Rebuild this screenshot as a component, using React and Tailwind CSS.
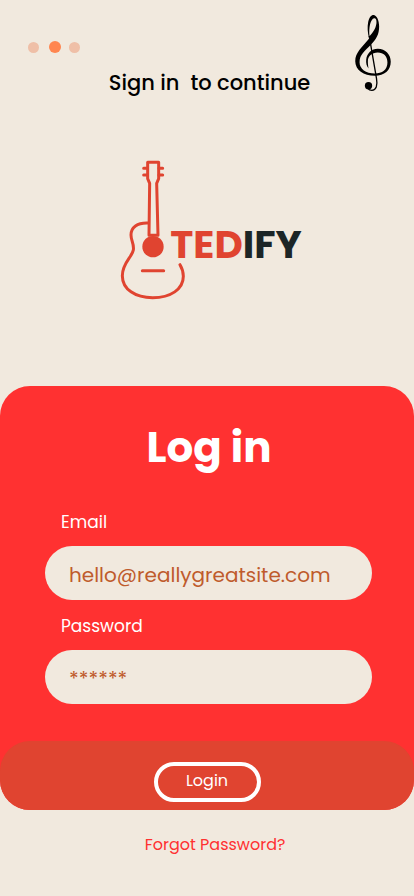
const fontStack = "font-[Poppins,Inter,'Open_Sans',sans-serif]";

function TrebleClef() {
  return (
    <svg viewBox="45 29 107 229" className="h-[76px] w-9" aria-hidden="true">
      <path
        fillRule="evenodd"
        d="M87 100C82 82 81 64 84 50C87 37 93 29 100 29C109 29 117 44 117 64C117 88 108 103 92 119C74 137 58 149 58 171C58 191 77 205 104 205C126 205 142 194 142 172C142 153 130 142 113 142C95 142 83 153 83 168C83 177 84 182 85 190C79 183 77 174 78 163C80 145 94 131 113 131C136 131 152 148 152 170C152 196 133 212 104 212C70 212 45 194 45 168C45 143 64 127 87 100ZM88 93C101 80 109 64 109 50C109 42 106 38 102 39C91 41 85 68 88 93Z"
      />
      <path
        d="M87 92L109 220C113 242 108 256 95 256Q88 256 82 250"
        fill="none"
        stroke="#000"
        strokeWidth="4"
      />
      <circle cx="85" cy="242" r="11" />
    </svg>
  );
}

function Guitar() {
  return (
    <svg viewBox="32 28 198 420" className="h-[140px] w-[66px] shrink-0" aria-hidden="true">
      <g fill="none" stroke="#e04430" strokeWidth="9" strokeLinecap="round" strokeLinejoin="round">
        <path d="M119 254L121 98L115 84V35H148V84L142 98L146 254Z" />
        <path d="M103 53H114M103 73H114M149 53H160M149 73H160" />
        <path d="M115 217C84 216 65 230 65 253C65 271 75 280 72 298C68 320 39 337 39 375C39 416 78 441 130 441C184 441 222 416 222 377C222 362 218 352 212 342" />
        <path d="M99 360H163" />
      </g>
      <circle cx="131" cy="288" r="32" fill="#e04430" />
    </svg>
  );
}

function Field({ id, label, type, placeholder }) {
  return (
    <div className="flex flex-col">
      <label htmlFor={id} className="h-[50px] pl-4 pt-3.5 text-[17px] leading-6 text-white">
        {label}
      </label>
      <input
        id={id}
        type={type}
        placeholder={placeholder}
        className="h-[54px] w-full rounded-[27px] bg-[#f1e9de] px-6 pt-1 text-[20px] text-[#bf5b2c] outline-none placeholder:text-[#bf5b2c]"
      />
    </div>
  );
}

export default function App() {
  return (
    <main className={`min-h-screen bg-[#f1e9de] ${fontStack}`}>
      <header className="grid grid-cols-[1fr_auto_1fr] items-start pl-7 pr-[23px] pt-[15px]">
        <div className="flex items-center gap-2 pt-[26px]">
          <span className="size-[11px] rounded-full bg-[#efbfa7]" />
          <span className="ml-0.5 size-3 rounded-full bg-[#ff8650]" />
          <span className="size-[11px] rounded-full bg-[#efbfa7]" />
        </div>
        <h2 className="whitespace-pre pt-[52px] text-[21px] font-medium leading-8 text-black">
          {"Sign in  to continue"}
        </h2>
        <div className="flex justify-end">
          <TrebleClef />
        </div>
      </header>

      <div className="flex items-center justify-center pb-[86px] pl-2 pt-[61px]">
        <Guitar />
        <p className="-ml-4 pt-7 text-[39px] font-bold leading-none text-[#e04430]">
          TED<span className="text-[#1c2526]">IFY</span>
        </p>
      </div>

      <form className="rounded-[30px] bg-[#ff3131]" onSubmit={(e) => e.preventDefault()}>
        <h1 className="pl-1 pt-8 text-center text-[42px] font-bold leading-[60px] text-white">
          Log in
        </h1>
        <div className="flex flex-col pb-[37px] pl-[45px] pr-[42px] pt-[18px]">
          <Field id="email" label="Email" type="email" placeholder="hello@reallygreatsite.com" />
          <Field id="password" label="Password" type="password" placeholder="******" />
        </div>
        <div className="flex justify-center rounded-[30px] bg-[#e04430] pb-2 pt-[21px]">
          <button
            type="submit"
            className="h-10 w-[107px] rounded-[20px] border-4 border-white pb-0.5 text-[16px] leading-6 text-white"
          >
            Login
          </button>
        </div>
      </form>

      <div className="flex justify-center pb-8 pl-4 pt-[23px]">
        <a href="#forgot" className="text-[16px] leading-6 text-[#ff3131]">
          Forgot Password?
        </a>
      </div>
    </main>
  );
}
